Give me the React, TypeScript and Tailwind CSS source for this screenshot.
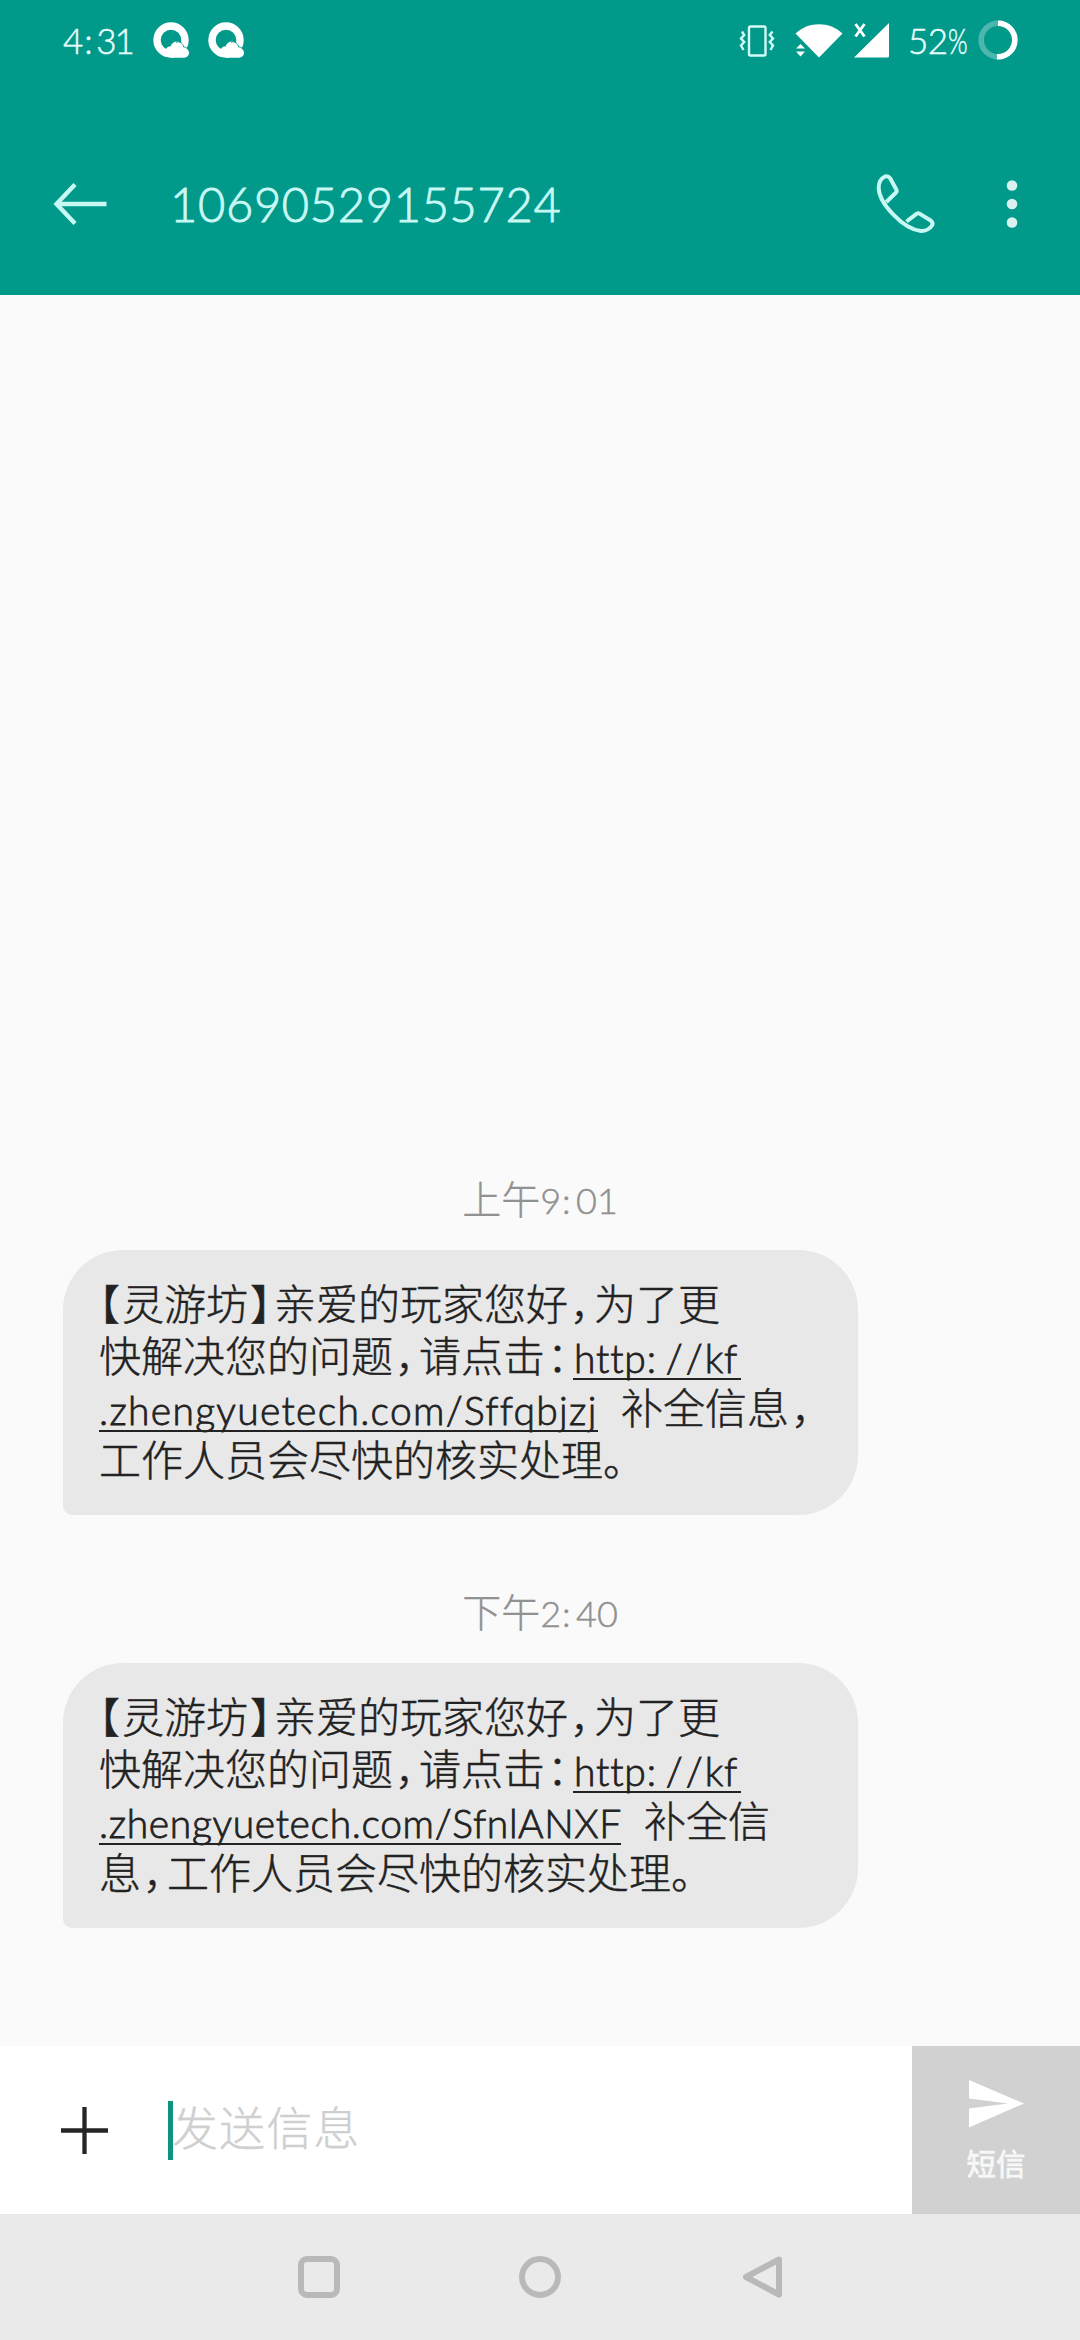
import type { ReactNode } from "react";

type Message = {
  id: number;
  time: [string, string];
  day: string;
  link: string;
  linkClass: string;
  tail: ReactNode;
  rest: ReactNode;
};

function P({ children }: { children: ReactNode }) {
  return <span className="inline-block w-[26px] pl-[2px] [font-feature-settings:'halt']">{children}</span>;
}

const messages: Message[] = [
  {
    id: 1,
    day: "上午",
    time: ["9", "01"],
    link: ".zhengyuetech.com/Sffqbjzj",
    linkClass: "w-[499px] tracking-[1.3px]",
    tail: <>补全信息<P>，</P></>,
    rest: <>工作人员会尽快的核实处理。</>,
  },
  {
    id: 2,
    day: "下午",
    time: ["2", "40"],
    link: ".zhengyuetech.com/SfnlANXF",
    linkClass: "w-[522px] tracking-[0.65px]",
    tail: <>补全信</>,
    rest: <>息<P>，</P>工作人员会尽快的核实处理。</>,
  },
];

function QIcon() {
  return (
    <svg width="36" height="36" viewBox="0 0 36 36">
      <circle cx="18" cy="18" r="14" fill="none" stroke="#fff" strokeWidth="7.4" />
      <path d="M12.5 30 C12.5 26 15 24 17.5 24.5 C19 20.5 23 18.7 26 20 C28.3 20.8 29.7 22.8 30 25.5 C33.5 25.5 36 28 36 30.8 C36 33.5 34 35.7 31 35.7 H18 Z" fill="#fff" />
      <path d="M23 20.4 C27 18.6 30 21.5 30.6 25 C32 25 33 25.3 34.2 26.2" fill="none" stroke="#00998a" strokeWidth="0.9" />
    </svg>
  );
}

function StatusBar() {
  return (
    <div className="flex h-[80px] items-center pl-[63px] pr-[62px] text-[35px] font-light leading-none text-[#e8fffc] [-webkit-text-stroke:0.5px]">
      <div className="flex w-[90px]">
        <span>4</span>
        <span className="w-[13px] pl-px">:</span>
        <span className="tracking-[-2px]">31</span>
      </div>
      <QIcon />
      <div className="w-[19px]" />
      <QIcon />
      <div className="flex-1" />
      <svg width="36" height="36" viewBox="0 0 36 36" fill="none" stroke="#d3fbf7" strokeWidth="2.4">
        <rect x="10" y="4.5" width="16.5" height="29" rx="1.5" />
        <path d="M3 9.5 L5.2 13 L2 16.5 L5.2 20 L2 23.5 L4.5 28" />
        <path d="M33.5 9.5 L30.8 13 L34 16.5 L30.8 20 L34 23.5 L31.5 28" />
      </svg>
      <svg className="ml-[19px]" width="50" height="36" viewBox="0 0 50 36" fill="#fff">
        <path d="M1.5 11.5 C14 -1 36 -1 48.5 11.5 L25 35.5 Z" />
        <path d="M0 24.5 L6.5 18 L16 27.5 L14 36 H0 Z" fill="#00998a" />
        <path d="M2 26.5 L6.5 22 L11 26.5 Z M2 29.5 H11 L6.5 34.5 Z" />
      </svg>
      <svg className="ml-[9px]" width="36" height="36" viewBox="0 0 36 36">
        <path d="M36 1 V34 Q36 35.5 34.5 35.5 H1 Z" fill="#fff" />
        <path d="M2.5 2 L11.5 14.5 M11.5 2 L2.5 14.5" stroke="#fff" strokeWidth="2.8" />
      </svg>
      <div className="ml-[19px] flex w-[70px]">
        <span className="tracking-[-0.5px]">52</span>
        <span className="inline-block origin-left scale-x-[.72]">%</span>
      </div>
      <svg width="40" height="40" viewBox="0 0 40 40" fill="none" strokeWidth="5.6">
        <circle cx="20" cy="20" r="16.8" stroke="#4db7ad" />
        <circle cx="20" cy="20" r="16.8" stroke="#fff" pathLength="100" strokeDasharray="51 49" transform="rotate(-90 20 20)" />
      </svg>
    </div>
  );
}

function Header() {
  return (
    <header className="h-[295px] bg-[#00998a]">
      <StatusBar />
      <div className="flex h-[247px] items-center pl-[53px] text-[#c8f8f4]">
        <svg width="54" height="42" viewBox="0 0 54 42" fill="none" stroke="currentColor" strokeWidth="4.4">
          <path d="M53.5 21 H4 M22 1.5 L3.5 21 L22 40.5" />
        </svg>
        <span className="ml-[63px] flex-1 pt-[2px] text-[47px] font-light leading-none tracking-[0.7px] [-webkit-text-stroke:0.9px]">
          10690529155724
        </span>
        <svg width="62" height="62" viewBox="0 0 62 62" fill="none" stroke="currentColor" strokeWidth="4" strokeLinejoin="round">
          <path d="M11.3 29 L21 19.5 Q22.3 18 21.3 16.5 L15 5 Q13 2.5 10 3.5 C6 5.5 3.7 10 3.7 14.7 C3.7 30 28 56 46 58 C50 58.2 55 56 57.3 52 Q58.2 49.5 56 47.8 L44.5 40.6 Q43 39.8 41.5 40.8 L31.5 48.5" />
        </svg>
        <svg className="ml-[69px] mr-[62px]" width="12" height="50" viewBox="0 0 12 50" fill="#d8f2ef">
          <circle cx="6" cy="6.5" r="5.3" />
          <circle cx="6" cy="25" r="5.3" />
          <circle cx="6" cy="43.5" r="5.3" />
        </svg>
      </div>
    </header>
  );
}

function Bubble({ message }: { message: Message }) {
  const [hour, minute] = message.time;
  return (
    <div className="mb-[62px]">
      <div className="flex h-[86px] items-center justify-center pb-[15px] text-[39px] font-light leading-none text-[#919191] [-webkit-text-stroke:0.3px]">
        <span>{message.day}</span>
        <span className="text-[36px] [-webkit-text-stroke:0.5px]">{hour}</span>
        <span className="w-[15px] pl-px text-[36px] [-webkit-text-stroke:0.5px]">:</span>
        <span className="text-[36px] [-webkit-text-stroke:0.5px]">{minute}</span>
      </div>
      <div className="ml-[63px] h-[265px] w-[795px] rounded-[60px] rounded-bl-[9px] bg-[#e8e8e8] pl-[36px] pt-[28px] text-[42px] font-light text-[#222222] [-webkit-text-stroke:0.45px] *:flex *:h-[52px] *:items-center *:whitespace-nowrap *:leading-[52px]">
        <div>
          <span className="inline-block w-[23px] [font-feature-settings:'halt']">【</span>灵游坊<P>】</P>亲爱的玩家您好<P>，</P>为了更
        </div>
        <div>
          快解决您的问题<P>，</P>请点击<P>：</P>
          <a className="ml-[2px] flex h-[47px] w-[168px] border-b-[2px] border-[#222222] pl-px text-[39px] leading-[50px] tracking-[0.8px] [-webkit-text-stroke:0.8px]">
            <span>http</span>
            <span className="w-[19px]">:</span>
            <span className="w-[20px]">/</span>
            <span className="w-[19px]">/</span>
            <span>kf</span>
          </a>
        </div>
        <div>
          <a className={`h-[47px] border-b-[2px] border-[#222222] text-[39px] leading-[50px] [-webkit-text-stroke:0.8px] ${message.linkClass}`}>{message.link}</a>
          <span className="ml-[23px] flex">{message.tail}</span>
        </div>
        <div>{message.rest}</div>
      </div>
    </div>
  );
}

function Composer() {
  return (
    <div className="flex h-[168px] bg-white">
      <div className="flex flex-1 items-center pl-[60px]">
        <svg width="49" height="49" viewBox="0 0 49 49" stroke="#252525" strokeWidth="4.3">
          <path d="M1 24.5 H48 M24.5 1 V48" />
        </svg>
        <div className="ml-[59px] h-[59px] w-[5px] bg-[#0d9380]" />
        <span className="-ml-px pb-[4px] text-[46px] font-light leading-none tracking-[1.1px] text-[#cfcfcf] [-webkit-text-stroke:0.35px]">
          发送信息
        </span>
      </div>
      <button className="flex w-[168px] flex-col items-center bg-[#d1d1d1] pt-[34px] text-[29.5px] font-medium leading-none text-[#f7f7f7] [-webkit-text-stroke:0.3px]">
        <svg width="56" height="48" viewBox="0 0 56 48" fill="#fff">
          <path d="M1 0 L56 23.5 L1 47.5 V28.5 L40 23.5 L1 18.5 Z" />
        </svg>
        <span className="mt-[21px]">短信</span>
      </button>
    </div>
  );
}

function NavBar() {
  return (
    <div className="flex h-[126px] items-center bg-[#eaeaea] pl-[298px]">
      <div className="size-[42px] rounded-[9px] border-6 border-[#b9b9b9]" />
      <div className="ml-[179px] size-[42px] rounded-full border-6 border-[#b9b9b9]" />
      <svg className="ml-[181px]" width="42" height="42" viewBox="0 0 42 42" fill="none" stroke="#b9b9b9" strokeWidth="6" strokeLinejoin="round">
        <path d="M37 3.5 L4 21 L37 38.5 Z" />
      </svg>
    </div>
  );
}

export default function App() {
  return (
    <div className="flex h-[2340px] w-[1080px] flex-col overflow-hidden bg-[#fafafa] font-['Lato','Noto_Sans_CJK_SC',sans-serif]">
      <Header />
      <main className="flex flex-1 flex-col justify-end pb-[56px]">
        {messages.map((m) => (
          <Bubble key={m.id} message={m} />
        ))}
      </main>
      <Composer />
      <NavBar />
    </div>
  );
}
